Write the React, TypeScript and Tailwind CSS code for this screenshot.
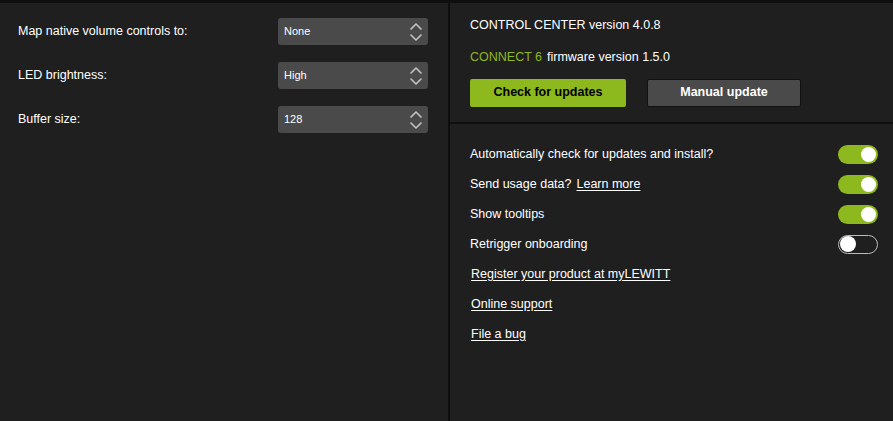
const font = { fontFamily: '"Liberation Sans", Arial, sans-serif' };

function Select({ value }: { value: string }) {
  return (
    <div className="flex h-[27px] w-[150px] items-center justify-between rounded-[3px] bg-[#4a4a4a] pl-[6px] pr-[5px] text-[11px] text-white">
      <span>{value}</span>
      <svg width="14" height="22" viewBox="0 0 14 22" fill="none" stroke="#c4c4c4" strokeWidth="1.6" strokeLinecap="round" strokeLinejoin="round">
        <path d="M2 8 L7 3 L12 8" />
        <path d="M2 14 L7 19 L12 14" />
      </svg>
    </div>
  );
}

function Toggle({ on }: { on: boolean }) {
  return on ? (
    <span className="flex h-[19px] w-[40px] items-center justify-end rounded-full bg-[#8db81e] pr-[2px]">
      <span className="size-[15px] rounded-full bg-white" />
    </span>
  ) : (
    <span className="flex h-[19px] w-[40px] items-center rounded-full border border-[#bdbdbd] pl-[1px]">
      <span className="size-[16px] rounded-full bg-white" />
    </span>
  );
}

const settings = [
  { label: "Map native volume controls to:", value: "None" },
  { label: "LED brightness:", value: "High" },
  { label: "Buffer size:", value: "128" },
];

const toggles = [
  { label: "Automatically check for updates and install?", on: true },
  { label: "Send usage data?", on: true, link: "Learn more" },
  { label: "Show tooltips", on: true },
  { label: "Retrigger onboarding", on: false },
];

const links = ["Register your product at myLEWITT", "Online support", "File a bug"];

export default function App() {
  return (
    <div
      style={font}
      className="flex h-[421px] w-[893px] border-t-[3px] border-[#0e0e0e] bg-[#201f20] text-[12.5px] text-white"
    >
      <section className="flex w-[448px] shrink-0 flex-col gap-[17px] pl-[18px] pr-[20px] pt-[15px]">
        {settings.map((s) => (
          <div key={s.label} className="flex items-center justify-between">
            <span>{s.label}</span>
            <Select value={s.value} />
          </div>
        ))}
      </section>

      <div className="w-[2px] shrink-0 bg-[#0e0e0e]" />

      <section className="flex flex-1 flex-col">
        <div className="flex h-[119px] flex-col pl-[20px] pt-[13px]">
          <p>CONTROL CENTER version 4.0.8</p>
          <p className="mt-[13px]">
            <span className="text-[#8db81e]">CONNECT 6</span>
            <span className="ml-[5px]">firmware version 1.5.0</span>
          </p>
          <div className="mt-[12px] flex gap-[21px] font-bold">
            <button className="h-[28px] w-[156px] rounded-[2px] bg-[#8db81e] text-[12.5px] text-black">
              Check for updates
            </button>
            <button className="h-[28px] w-[154px] rounded-[2px] border border-[#111] bg-[#4a4a4a] text-[12.5px] text-white">
              Manual update
            </button>
          </div>
        </div>

        <div className="h-[2px] bg-[#0e0e0e]" />

        <div className="flex flex-col pl-[20px] pr-[15px] pt-[15px]">
          {toggles.map((t) => (
            <div key={t.label} className="flex h-[30px] items-center justify-between">
              <span>
                {t.label}
                {t.link && <span className="ml-[5px] underline underline-offset-2">{t.link}</span>}
              </span>
              <Toggle on={t.on} />
            </div>
          ))}
          {links.map((l) => (
            <div key={l} className="flex h-[30px] items-center">
              <span className="pl-px underline underline-offset-2">{l}</span>
            </div>
          ))}
        </div>
      </section>
    </div>
  );
}
